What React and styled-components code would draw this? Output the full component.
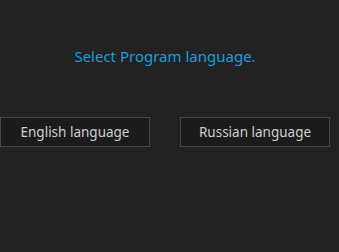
import React from "react";
import styled, { createGlobalStyle } from "styled-components";

const GlobalStyle = createGlobalStyle`
  html, body {
    margin: 0;
    padding: 0;
    background: #222222;
  }
  body {
    font-family: "Segoe UI", "Noto Sans", "Open Sans", sans-serif;
  }
`;

const Page = styled.div`
  width: 330px;
  height: 252px;
  display: flex;
  flex-direction: column;
`;

const Title = styled.div`
  margin-top: 45px;
  text-align: center;
  color: #12a0de;
  font-size: 15px;
  line-height: 22px;
`;

const Choices = styled.div`
  margin-top: 50px;
  display: flex;
  gap: 30px;
`;

const LangButton = styled.button`
  width: 150px;
  height: 30px;
  padding: 0;
  background: #1b1b1b;
  border: 1px solid #474747;
  color: #cfcfcf;
  font-family: inherit;
  font-size: 13.5px;
  cursor: pointer;
`;

const App = () => {
  return (
    <>
      <GlobalStyle />
      <Page>
        <Title>Select Program language.</Title>
        <Choices>
          <LangButton>English language</LangButton>
          <LangButton>Russian language</LangButton>
        </Choices>
      </Page>
    </>
  );
};

export default App;
